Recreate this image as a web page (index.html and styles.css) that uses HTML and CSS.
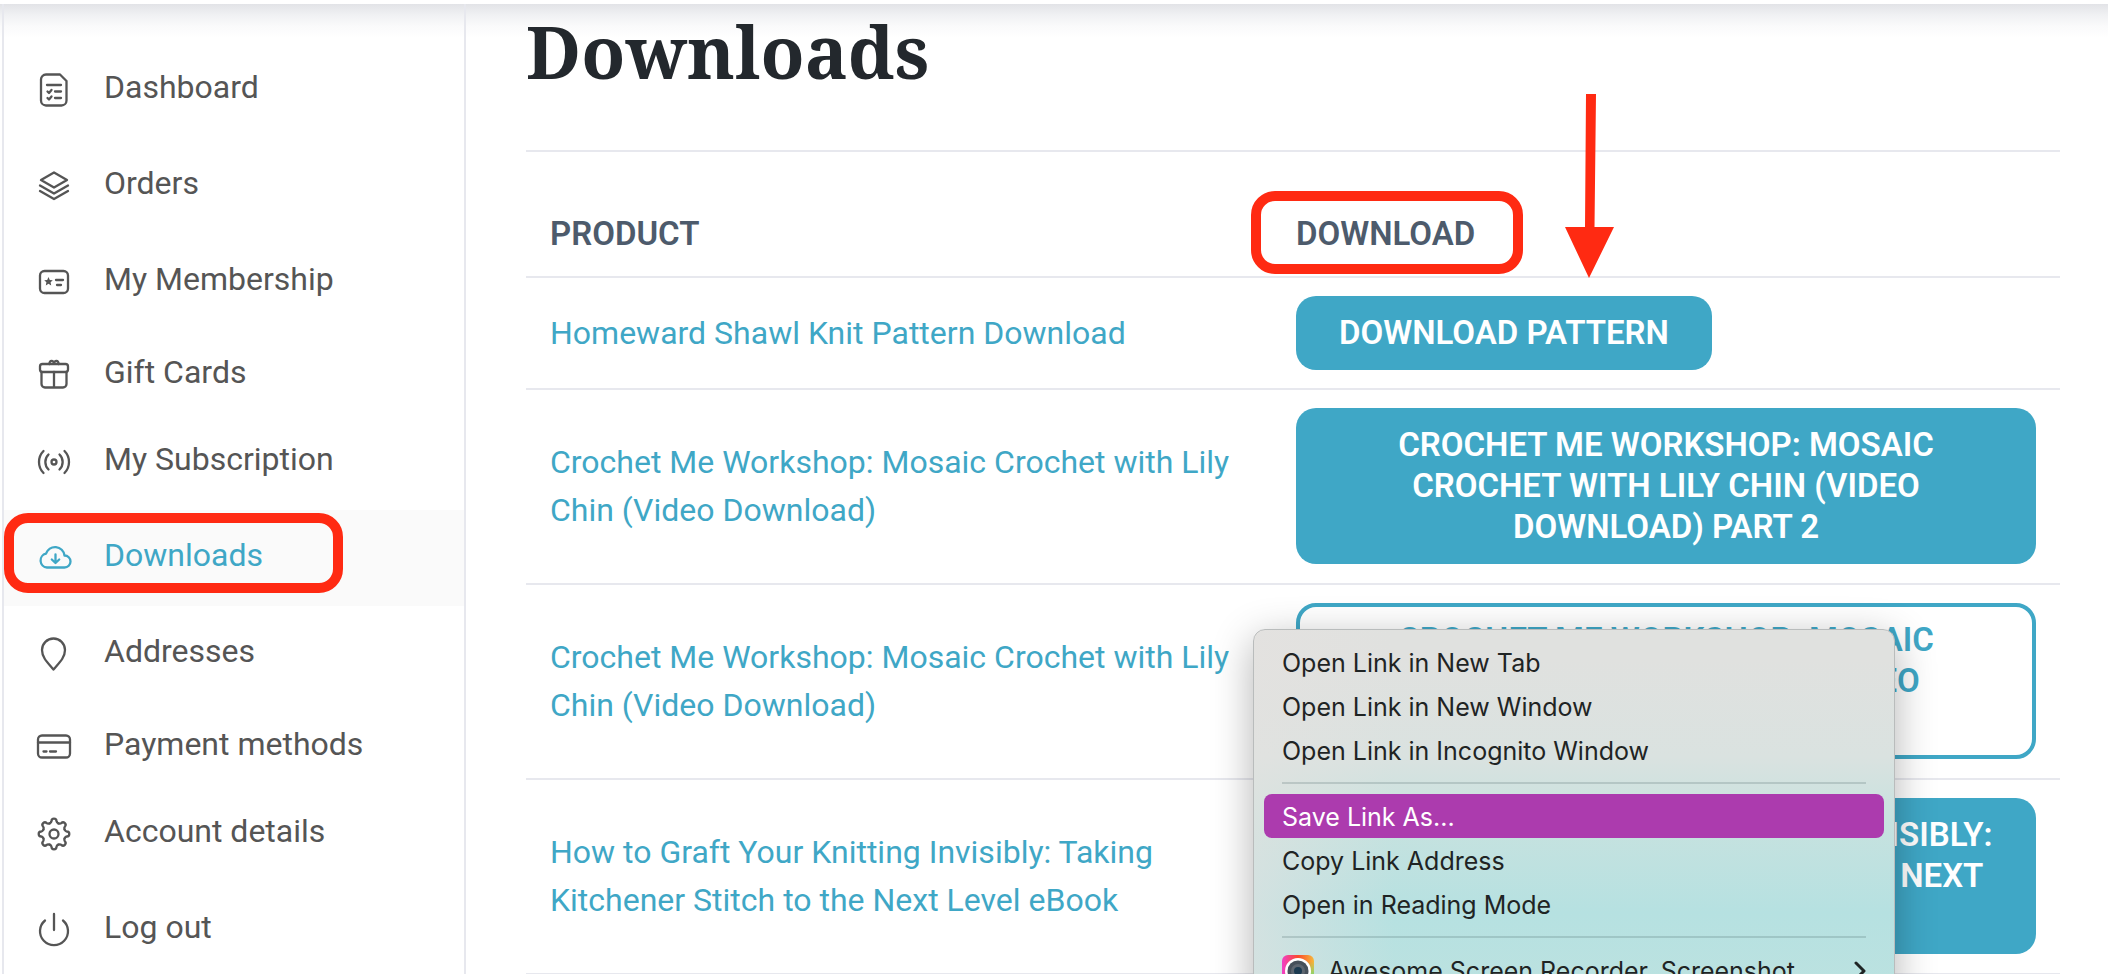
FILE: index.html
```html
<!DOCTYPE html>
<html lang="en">
<head>
    <meta charset="utf-8">
    <title>My Account - Downloads</title>
    <meta name="viewport" content="width=device-width, initial-scale=1">
    <link rel="stylesheet" href="styles.css">
</head>
<body>
    <div class="site-header"></div>
    <div class="account">
        <nav class="account-nav">
            <ul>
                <li>
                    <a href="#dashboard">
                        <svg class="icon" viewBox="0 0 36 36"><path d="M10 2.500h14l6.500 6.500v19.500a5 5 0 0 1-5 5h-15.500a5 5 0 0 1-5-5v-21a5 5 0 0 1 5-5z"/><path d="M11 13h14M19 19.500h6M19 26h6M11.500 19.500l1.500 1.500 2.500-3M11.500 26l1.500 1.500 2.500-3"/></svg>
                        <span>Dashboard</span>
                    </a>
                </li>
                <li>
                    <a href="#orders">
                        <svg class="icon" viewBox="0 0 36 36"><path d="M18 4.500L31 12l-13 7.500L5 12z"/><path d="M4 17.500l14 8 14-8M4 23l14 8 14-8"/></svg>
                        <span>Orders</span>
                    </a>
                </li>
                <li class="mid">
                    <a href="#membership">
                        <svg class="icon" viewBox="0 0 36 36"><rect x="4" y="7" width="28" height="22" rx="4.500"/><path d="M20 16h7M21 21h4"/><path class="solid" d="M12.500 13l1.300 2.900 3 .3-2.200 2.100.6 3.100-2.700-1.600-2.700 1.600.6-3.100-2.200-2.100 3-.3z"/></svg>
                        <span>My Membership</span>
                    </a>
                </li>
                <li class="short">
                    <a href="#gift-cards">
                        <svg class="icon" viewBox="0 0 36 36"><rect x="4" y="7" width="28" height="8" rx="2.500"/><path d="M5.500 15v12a3.500 3.500 0 0 0 3.500 3.500h18a3.500 3.500 0 0 0 3.500-3.500v-12M18 15v15.500M13.500 7c-.5-4 4.500-4 4.500-.5 0-3.500 5-3.500 4.500.5"/></svg>
                        <span>Gift Cards</span>
                    </a>
                </li>
                <li>
                    <a href="#subscription">
                        <svg class="icon" viewBox="0 0 36 36"><circle cx="18" cy="18" r="2.500"/><path d="M12.500 25.500a10.500 10.500 0 0 1 0-15M23.500 25.500a10.500 10.500 0 0 0 0-15M7.500 29c-6-6-6-16 0-22M28.500 29c6-6 6-16 0-22"/></svg>
                        <span>My Subscription</span>
                    </a>
                </li>
                <li class="active">
                    <a href="#downloads">
                        <svg class="icon" viewBox="0 0 36 36"><path d="M11 27.500a7 7 0 0 1-1-13.800 9.500 9.500 0 0 1 18.500 1.800 6 6 0 0 1 0 12z"/><path d="M19.500 14.500v8M15.800 19.500l3.700 3.500 3.700-3.500"/></svg>
                        <span>Downloads</span>
                    </a>
                </li>
                <li class="mid">
                    <a href="#addresses">
                        <svg class="icon" viewBox="0 0 36 36"><path d="M17.500 33.500c-5-6-11.500-11.500-11.500-19.500a11.500 11.500 0 0 1 23 0c0 8-6.500 13.500-11.500 19.500z"/></svg>
                        <span>Addresses</span>
                    </a>
                </li>
                <li class="short">
                    <a href="#payment-methods">
                        <svg class="icon" viewBox="0 0 36 36"><rect x="2" y="6.500" width="32" height="22" rx="4"/><path d="M2 13.500h32M7.500 22.500h3M14 22.500h6"/></svg>
                        <span>Payment methods</span>
                    </a>
                </li>
                <li>
                    <a href="#account-details">
                        <svg class="icon" viewBox="-18 -18 36 36">
                            <defs><path id="tooth" d="M-4.400-10.600c1.600-.7 1.800-1 1.900-2.200a2.500 2.500 0 0 1 5 0c.1 1.200.3 1.500 1.900 2.200"/></defs>
                            <circle r="4.500"/>
                            <use href="#tooth"/>
                            <use href="#tooth" transform="rotate(45)"/>
                            <use href="#tooth" transform="rotate(90)"/>
                            <use href="#tooth" transform="rotate(135)"/>
                            <use href="#tooth" transform="rotate(180)"/>
                            <use href="#tooth" transform="rotate(225)"/>
                            <use href="#tooth" transform="rotate(270)"/>
                            <use href="#tooth" transform="rotate(315)"/>
                        </svg>
                        <span>Account details</span>
                    </a>
                </li>
                <li>
                    <a href="#logout">
                        <svg class="icon" viewBox="0 0 36 36"><path d="M18 2v16M9 8.500a14 14 0 1 0 18 0"/></svg>
                        <span>Log out</span>
                    </a>
                </li>
            </ul>
        </nav>

        <main class="account-content">
            <h1>Downloads</h1>
            <table class="downloads-table">
                <thead>
                    <tr>
                        <th class="product">Product</th>
                        <th><span class="marked">Download</span></th>
                    </tr>
                </thead>
                <tbody>
                    <tr>
                        <td><a href="#p1">Homeward Shawl Knit Pattern Download</a></td>
                        <td><a href="#d1" class="btn">Download Pattern</a></td>
                    </tr>
                    <tr class="tall">
                        <td><a href="#p2">Crochet Me Workshop: Mosaic Crochet with Lily Chin (Video Download)</a></td>
                        <td><a href="#d2" class="btn">Crochet Me Workshop: Mosaic Crochet with Lily Chin (Video Download) Part 2</a></td>
                    </tr>
                    <tr class="tall">
                        <td><a href="#p3">Crochet Me Workshop: Mosaic Crochet with Lily Chin (Video Download)</a></td>
                        <td><a href="#d3" class="btn btn-outline">Crochet Me Workshop: Mosaic Crochet with Lily Chin (Video Download) Part 1</a></td>
                    </tr>
                    <tr class="tall">
                        <td><a href="#p4">How to Graft Your Knitting Invisibly: Taking Kitchener Stitch to the Next Level eBook</a></td>
                        <td><a href="#d4" class="btn">How to Graft Your Knitting Invisibly: Taking Kitchener Stitch to the Next Level eBook</a></td>
                    </tr>
                </tbody>
            </table>
        </main>
    </div>

    <svg class="arrow" viewBox="0 0 50 184"><path d="M21 0h10l-1.500 133H49L24 184 0 133h20z"/></svg>

    <div class="context-menu">
        <button type="button">Open Link in New Tab</button>
        <button type="button">Open Link in New Window</button>
        <button type="button">Open Link in Incognito Window</button>
        <hr>
        <button type="button" class="selected">Save Link As...</button>
        <button type="button">Copy Link Address</button>
        <button type="button">Open in Reading Mode</button>
        <hr>
        <button type="button">
            <svg class="app-icon" viewBox="0 0 32 32">
                <defs>
                    <linearGradient id="rainbow" x1="0" y1="0" x2="1" y2="0">
                        <stop offset="0" stop-color="#f13fc8"/>
                        <stop offset=".5" stop-color="#fb4a2c"/>
                        <stop offset="1" stop-color="#f6b93b"/>
                    </linearGradient>
                    <linearGradient id="rainbow-side" x1="0" y1="0" x2="0" y2="1">
                        <stop offset=".2" stop-color="#8fd46b" stop-opacity="0"/>
                        <stop offset=".6" stop-color="#8fd46b"/>
                    </linearGradient>
                </defs>
                <rect width="32" height="32" rx="6" fill="url(#rainbow)"/>
                <rect x="22" width="10" height="32" rx="6" fill="url(#rainbow-side)"/>
                <circle cx="16" cy="16" r="13" fill="#fff"/>
                <circle cx="16" cy="16" r="10.500" fill="#46505a"/>
                <circle cx="16" cy="16" r="7" fill="#5d6670"/>
                <circle cx="16" cy="16" r="4" fill="#1b3a50"/>
            </svg>
            <span>Awesome Screen Recorder, Screenshot</span>
            <svg class="chevron" viewBox="0 0 12 20"><path d="M2 2l8 8-8 8"/></svg>
        </button>
    </div>
</body>
</html>
```
FILE: styles.css
```css
*,
*::after {
    box-sizing: border-box;
}

body {
    margin: 0;
    font-family: Roboto, "Liberation Sans", sans-serif;
    font-size: 32px;
    line-height: 48px;
    color: #555;
    background-color: #fff;
    height: 100vh;
    overflow: hidden;
    position: relative;
}

a {
    color: #3fa7c6;
    text-decoration: none;
}

.site-header {
    height: 4px;
    background-color: #fff;
}

.account {
    display: flex;
    min-height: calc(100vh - 4px);
    background-image: linear-gradient(#e2e3e7, #f0f1f3 11px, #fafafb 22px, #fff 34px);
    background-repeat: no-repeat;
}

.account-nav {
    flex: none;
    width: 464px;
    margin-left: 2px;
    padding-top: 38px;
    border-left: 2px solid #e7e8ee;
    border-right: 2px solid #e7e8ee;
}

    .account-nav ul {
        list-style: none;
        margin: 0;
        padding: 0;
    }

    .account-nav li {
        position: relative;
        height: 96px;
    }

    .account-nav li.mid {
        height: 93px;
    }

    .account-nav li.short {
        height: 87px;
    }

    .account-nav li.active {
        background-color: #fafafa;
    }

        .account-nav li.active::after {
            content: "";
            position: absolute;
            left: 0;
            top: 3px;
            width: 339px;
            height: 80px;
            border: 10px solid #ff2a12;
            border-radius: 24px;
            pointer-events: none;
        }

    .account-nav a {
        display: flex;
        align-items: center;
        gap: 32px;
        height: 96px;
        padding-left: 32px;
        color: #555;
    }

    .account-nav span {
        padding-bottom: 6px;
    }

    .account-nav .active a {
        color: #3fa7c6;
    }

.icon {
    width: 36px;
    height: 36px;
    fill: none;
    stroke: currentColor;
    stroke-width: 2.3;
    stroke-linecap: round;
    stroke-linejoin: round;
}

    .icon .solid {
        fill: currentColor;
        stroke: none;
    }

.account-content {
    flex: 1;
    padding: 0 48px 0 60px;
}

    .account-content h1 {
        margin: 0 0 52px;
        font-family: "Noto Serif", "DejaVu Serif Condensed", "DejaVu Serif", serif;
        font-size: 72px;
        font-weight: 700;
        line-height: 94px;
        color: #23282d;
    }

.downloads-table {
    width: 100%;
    table-layout: fixed;
    border-collapse: separate;
    border-spacing: 0;
    border-bottom: 2px solid #e7e8ee;
}

    .downloads-table th,
    .downloads-table td {
        padding: 18px 24px;
        border-top: 2px solid #e7e8ee;
        text-align: left;
        vertical-align: middle;
    }

    .downloads-table .tall td {
        padding-bottom: 19px;
    }

    .downloads-table th {
        padding-top: 58px;
        color: #4d5b6c;
        font-size: 33px;
        font-weight: 600;
        text-transform: uppercase;
    }

    .downloads-table th.product {
        width: 746px;
    }

.marked {
    position: relative;
}

    .marked::after {
        content: "";
        position: absolute;
        left: -45px;
        right: -48px;
        top: -23px;
        height: 83px;
        border: 10px solid #ff2a12;
        border-radius: 24px;
    }

.btn {
    display: block;
    width: fit-content;
    padding: 16px 43px 17px;
    border-radius: 20px;
    background-color: #3fa7c6;
    color: #fff;
    font-size: 33px;
    font-weight: 600;
    line-height: 41px;
    text-align: center;
    text-transform: uppercase;
}

.btn-outline {
    padding: 12px 39px 13px;
    border: 4px solid #3fa7c6;
    background-color: #fff;
    color: #3fa7c6;
}

.arrow {
    position: absolute;
    left: 1565px;
    top: 94px;
    width: 50px;
    height: 184px;
    fill: #ff2a12;
}

.context-menu {
    position: absolute;
    left: 1253px;
    top: 629px;
    width: 642px;
    padding: 10px;
    border: 1px solid #b9bcbc;
    border-radius: 12px;
    background:
        linear-gradient(90deg, rgba(229, 226, 224, 0.6), rgba(229, 226, 224, 0) 22%),
        linear-gradient(#e0e1df 8%, #dae2e0 34%, #c8e2df 50%, #b6e1e1 76%, #bde2e0);
    box-shadow: 0 10px 40px rgba(0, 0, 0, 0.3);
    font-family: Inter, "Liberation Sans", sans-serif;
}

    .context-menu button {
        display: flex;
        align-items: center;
        gap: 14px;
        width: 100%;
        height: 44px;
        padding: 1px 18px 0;
        border: none;
        border-radius: 8px;
        background: none;
        color: #1f2424;
        font-family: inherit;
        font-size: 25px;
        text-align: left;
    }

    .context-menu button.selected {
        background-color: #ac3bae;
        color: #fff;
    }

    .context-menu hr {
        height: 2px;
        margin: 10px 18px;
        border: none;
        background-color: rgba(60, 90, 90, 0.2);
    }

.app-icon {
    width: 32px;
    height: 32px;
}

.chevron {
    width: 12px;
    height: 20px;
    margin-left: auto;
    fill: none;
    stroke: #1f2424;
    stroke-width: 3;
    stroke-linecap: round;
    stroke-linejoin: round;
}
```
